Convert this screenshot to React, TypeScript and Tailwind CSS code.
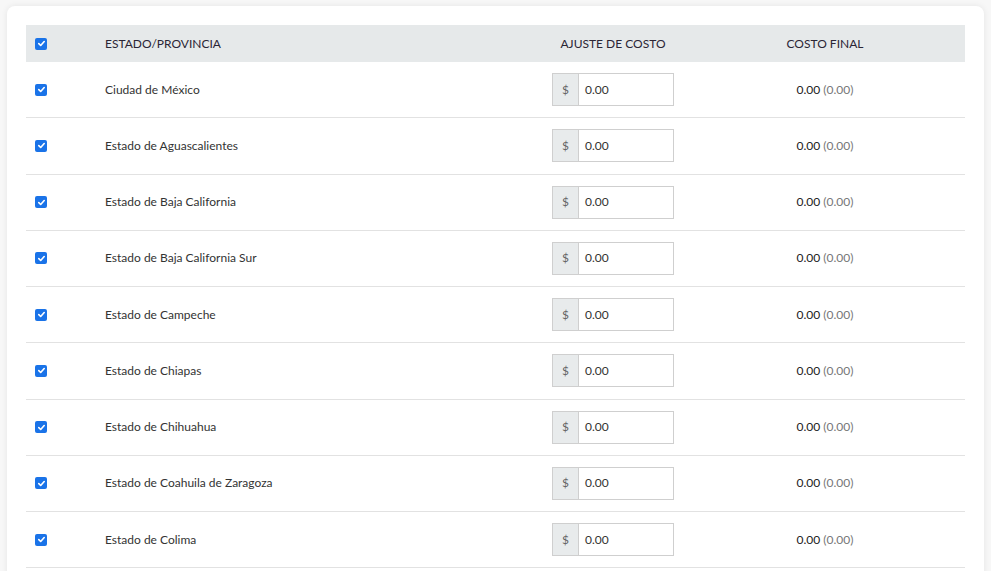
import React from "react";

const rows = [
  "Ciudad de México",
  "Estado de Aguascalientes",
  "Estado de Baja California",
  "Estado de Baja California Sur",
  "Estado de Campeche",
  "Estado de Chiapas",
  "Estado de Chihuahua",
  "Estado de Coahuila de Zaragoza",
  "Estado de Colima",
];

function Check() {
  return (
    <span className="inline-flex h-[12px] w-[12px] items-center justify-center rounded-[2px] bg-[#1a73e8]">
      <svg width="9" height="9" viewBox="0 0 10 10" fill="none">
        <path d="M2 5.2 L4.1 7.2 L8 2.8" stroke="white" strokeWidth="1.8" strokeLinecap="round" strokeLinejoin="round" />
      </svg>
    </span>
  );
}

export default function App() {
  return (
    <div className="h-[571px] overflow-hidden bg-[#f7f7f7] pl-[7px] pr-[7px] pt-[6px] text-[12px] text-[#333]" style={{ fontFamily: "Lato, 'Noto Sans', sans-serif" }}>
      <div className="h-[600px] rounded-[8px] bg-white px-[19px] pt-[19px] shadow-[0_0_6px_rgba(0,0,0,0.08)]">
        <div className="grid grid-cols-[79px_402px_212px_212px_35px] items-center bg-[#e6e9ea] h-[37px] text-[#2b2535]">
          <div className="pl-[9px] flex items-center"><Check /></div>
          <div>ESTADO/PROVINCIA</div>
          <div className="text-center">AJUSTE DE COSTO</div>
          <div className="text-center">COSTO FINAL</div>
          <div />
        </div>
        {rows.map((r) => (
          <div key={r} className="grid grid-cols-[79px_402px_212px_212px_35px] items-center h-[56.25px] border-b border-[#e2e2e2]">
            <div className="pl-[9px] flex items-center"><Check /></div>
            <div className="text-[#333]">{r}</div>
            <div className="flex justify-center">
              <div className="flex h-[33px] w-[122px] border border-[#cfcfcf]">
                <div className="flex w-[26px] items-center justify-center border-r border-[#cfcfcf] bg-[#e8ebec] text-[#666]">$</div>
                <div className="flex flex-1 items-center pl-[6px] text-[#333]">0.00</div>
              </div>
            </div>
            <div className="text-center">
              <span className="text-[#222]">0.00</span> <span className="text-[#777]">(0.00)</span>
            </div>
            <div />
          </div>
        ))}
      </div>
    </div>
  );
}
